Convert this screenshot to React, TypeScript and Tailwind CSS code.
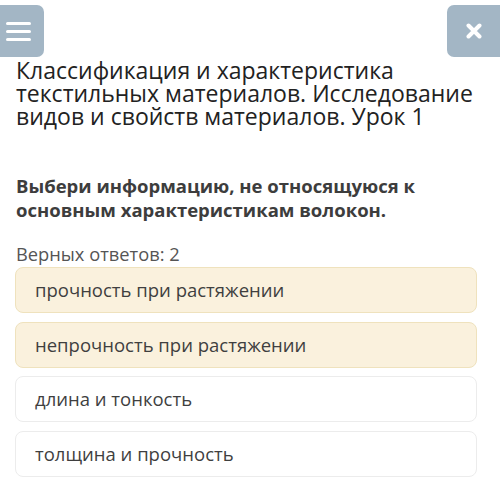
import React from 'react';

const options = [
    { text: 'прочность при растяжении', selected: true },
    { text: 'непрочность при растяжении', selected: true },
    { text: 'длина и тонкость', selected: false },
    { text: 'толщина и прочность', selected: false },
];

export default function App() {
    return (
        <div className="w-[500px] h-[483px] bg-white overflow-hidden font-['Open_Sans',sans-serif]">
            <div className="pt-[5px] flex justify-between">
                <div className="w-[44px] h-[52px] rounded-r-[7px] bg-[#a3b6c5] flex flex-col justify-center gap-[5px] pl-[6px]">
                    <span className="block w-[25px] h-[3px] bg-white rounded-sm" />
                    <span className="block w-[25px] h-[3px] bg-white rounded-sm" />
                    <span className="block w-[25px] h-[3px] bg-white rounded-sm" />
                </div>
                <div className="w-[53px] h-[52px] rounded-l-[7px] bg-[#a3b6c5] flex items-center justify-center">
                    <svg width="16" height="16" viewBox="0 0 16 16">
                        <path d="M2.5 2.5 L13.5 13.5 M13.5 2.5 L2.5 13.5" stroke="white" strokeWidth="4" strokeLinecap="round" />
                    </svg>
                </div>
            </div>

            <h1 className="mt-[2px] px-[16px] text-[23px] leading-[23px] text-[#222]">
                Классификация и характеристика текстильных материалов. Исследование видов и свойств материалов. Урок 1
            </h1>

            <p className="mt-[46px] px-[16px] text-[18.5px] leading-[24px] font-bold text-[#3d3d3d]">
                Выбери информацию, не относящуюся к основным характеристикам волокон.
            </p>

            <p className="mt-[20px] px-[16px] text-[18.3px] leading-[24px] text-[#555]">Верных ответов: 2</p>

            <div className="mt-[1px] px-[15px] w-[492px] flex flex-col gap-[8.5px]">
                {options.map((o) => (
                    <div
                        key={o.text}
                        className={
                            o.selected
                                ? 'h-[46px] rounded-[8px] border border-[#efe2bd] bg-[#faf1dd] flex items-center pl-[19px] text-[18.5px] text-[#3f3f3f]'
                                : 'h-[46px] rounded-[8px] border border-[#ececec] bg-white flex items-center pl-[19px] text-[18.5px] text-[#3f3f3f]'
                        }
                    >
                        {o.text}
                    </div>
                ))}
            </div>
        </div>
    );
}
